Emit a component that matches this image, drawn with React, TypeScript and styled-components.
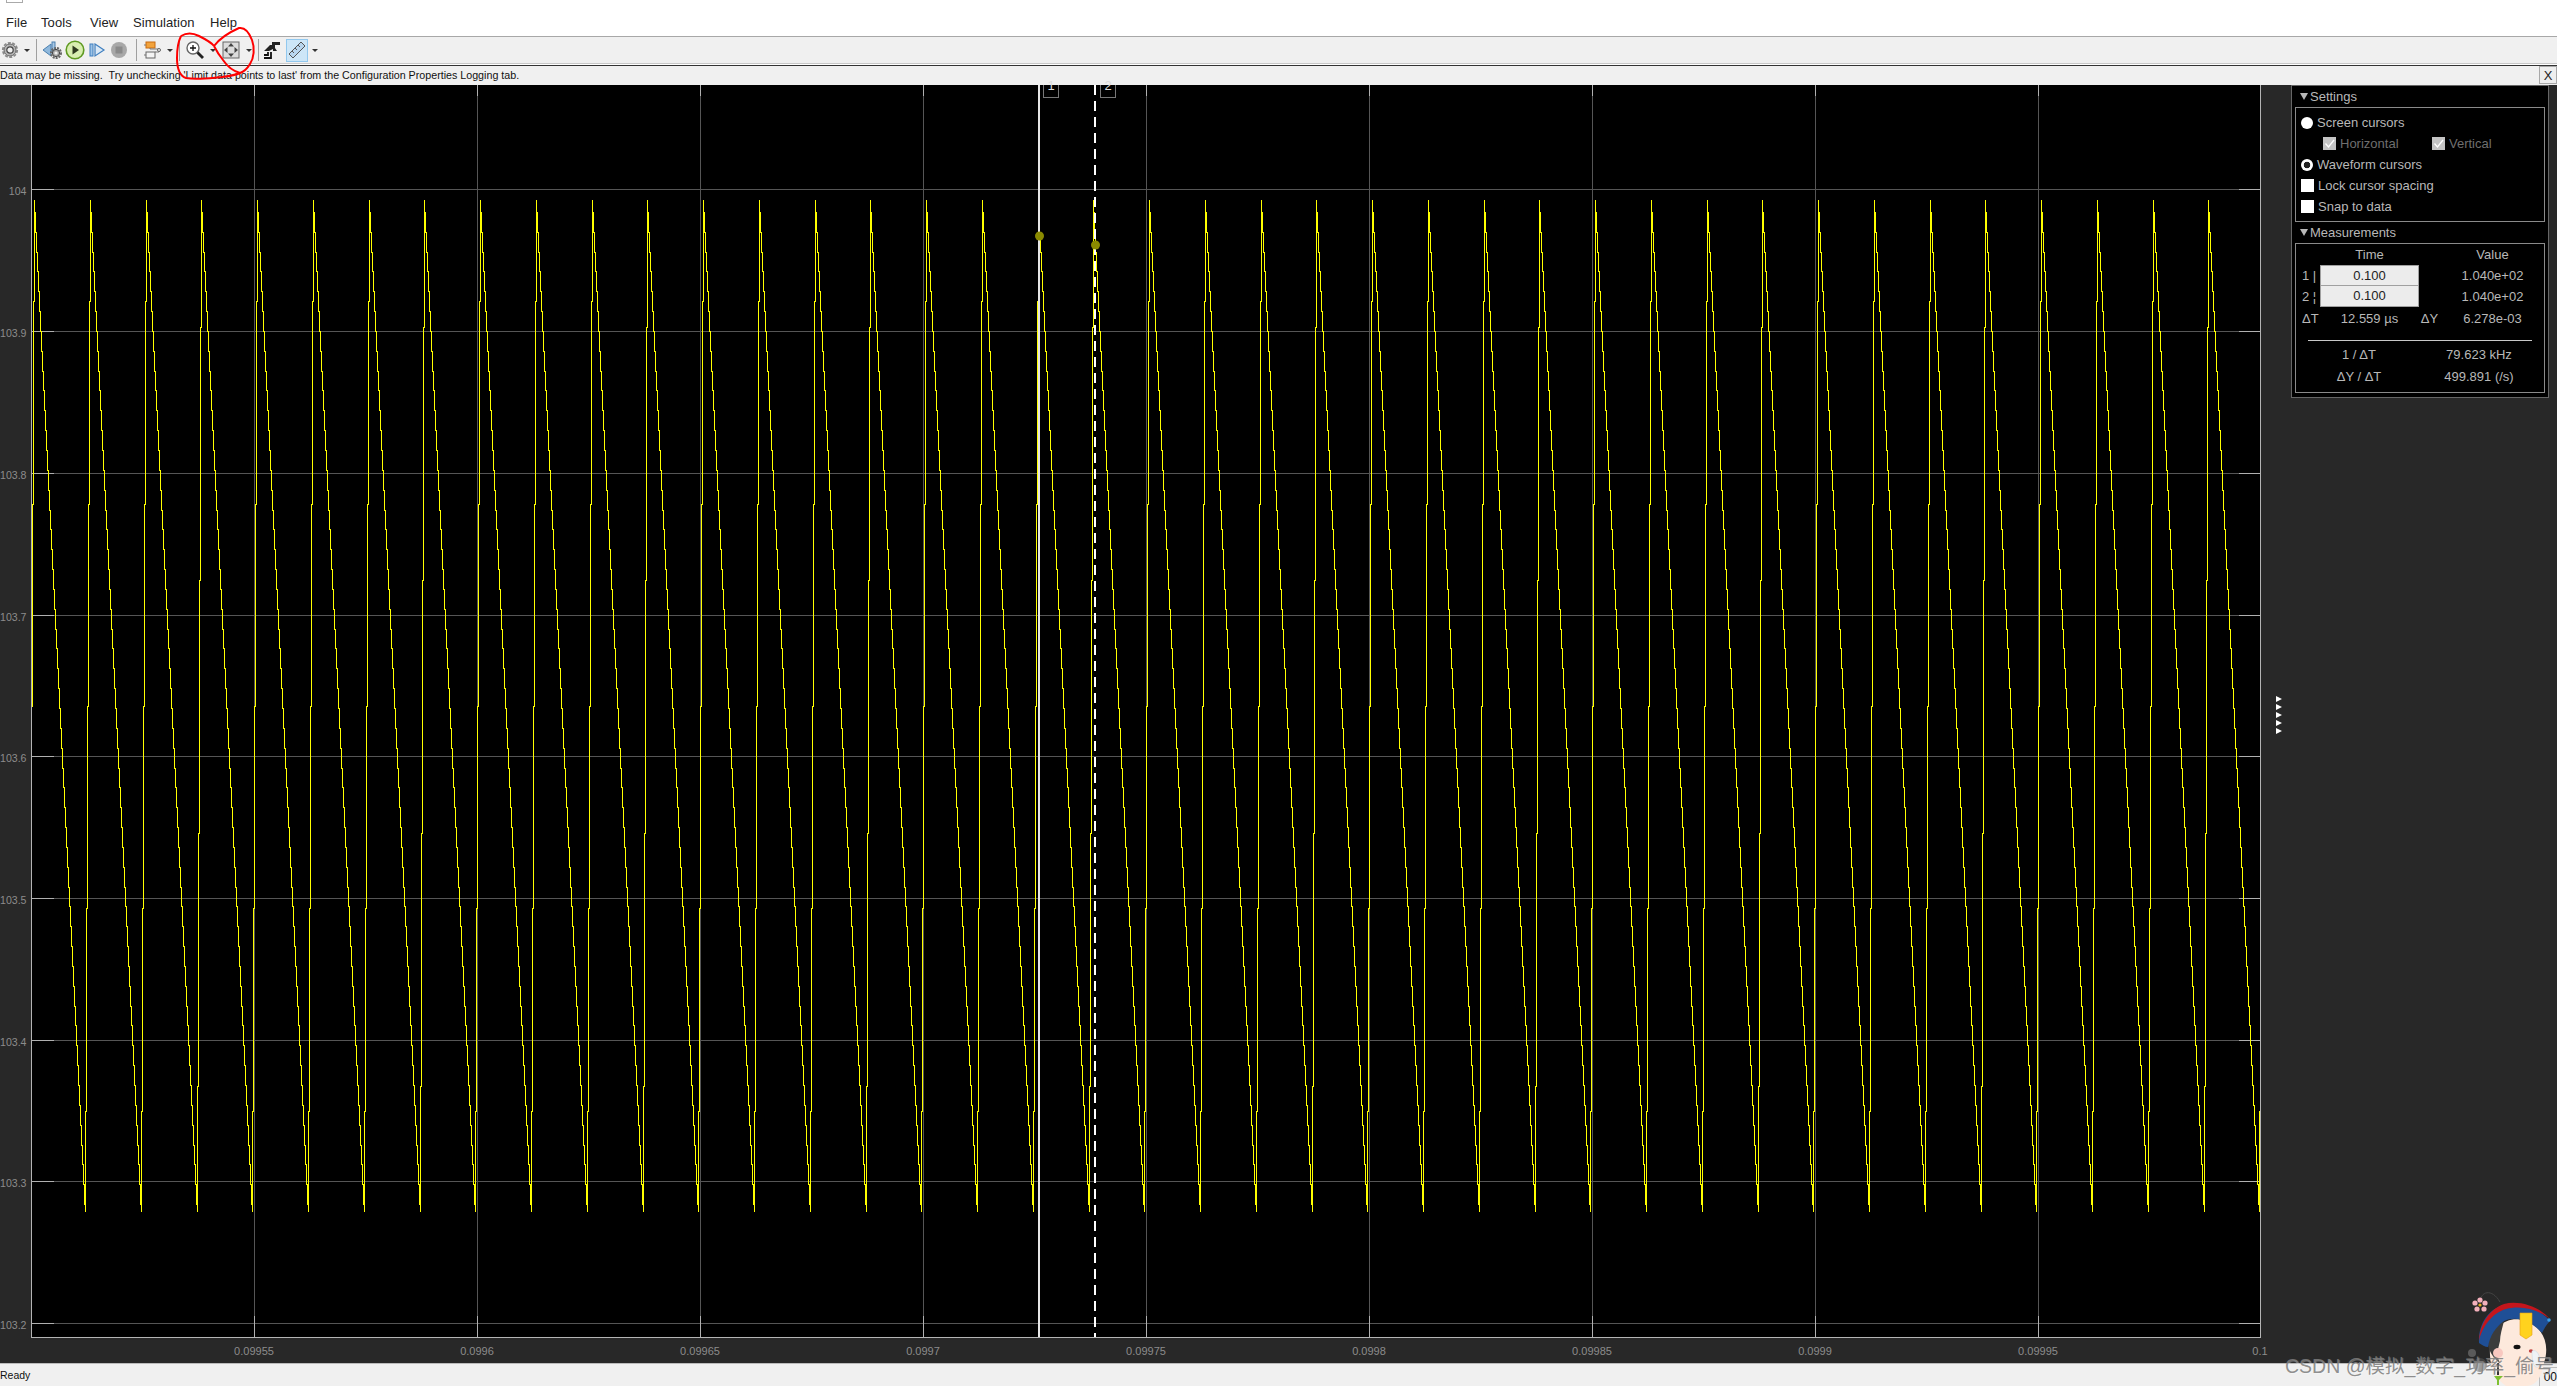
import styled, { createGlobalStyle } from "styled-components";

const GlobalStyle = createGlobalStyle`
  html, body {
    margin: 0;
    padding: 0;
    overflow: hidden;
    background: #282828;
  }
  #root {
    width: 2557px;
    height: 1386px;
  }
`;

const Page = styled.div`
  position: relative;
  display: flex;
  flex-direction: column;
  width: 2557px;
  height: 1386px;
  overflow: hidden;
  background: #282828;
  font-family: "Liberation Sans", Arial, sans-serif;
`;

const MenuBar = styled.div`
  position: relative;
  flex: none;
  height: 37px;
  box-sizing: border-box;
  background: #fff;
  border-bottom: 1px solid #a8a8a8;
  font-size: 13px;
  color: #222;
`;

const TitleStub = styled.div`
  position: absolute;
  left: 6px;
  top: 0;
  width: 15px;
  height: 2px;
  border: 1px solid #aaa;
  border-top: 0;
`;

const MenuItem = styled.span<{ $x: number }>`
  position: absolute;
  left: ${(p) => p.$x}px;
  top: 15px;
  letter-spacing: 0.1px;
`;

const Toolbar = styled.div`
  display: flex;
  flex: none;
  align-items: center;
  height: 27px;
  box-sizing: border-box;
  background: #f0f0f0;
  border-bottom: 1px solid #c8c8c8;
`;

const ToolButton = styled.div<{ $w?: number; $ml?: number; $active?: boolean }>`
  display: flex;
  align-items: center;
  justify-content: center;
  flex: none;
  width: ${(p) => p.$w ?? 22}px;
  height: 23px;
  margin-left: ${(p) => p.$ml ?? 0}px;
  box-sizing: border-box;
  ${(p) => (p.$active ? "background: #cde6f7; border: 1px solid #92c8ee;" : "")}
`;

const Caret = styled.div<{ $w?: number; $ml?: number }>`
  flex: none;
  width: ${(p) => p.$w ?? 12}px;
  margin-left: ${(p) => p.$ml ?? 0}px;
  display: flex;
  justify-content: center;
  &::after {
    content: "";
    border-left: 3px solid transparent;
    border-right: 3px solid transparent;
    border-top: 3px solid #333;
  }
`;

const ToolSep = styled.div<{ $ml: number }>`
  flex: none;
  width: 1px;
  height: 22px;
  margin-left: ${(p) => p.$ml}px;
  background: #a0a0a0;
`;

const MessageBar = styled.div`
  display: flex;
  flex: none;
  justify-content: space-between;
  height: 21px;
  box-sizing: border-box;
  background: #f0f0f0;
  border-top: 1px solid #fff;
  box-shadow: inset 0 1px 0 #333;
  padding-top: 1px;
  font-size: 10.7px;
  line-height: 16px;
  color: #111;
`;

const MessageText = styled.span`
  padding-top: 1px;
`;

const CloseButton = styled.div`
  width: 18px;
  height: 18px;
  box-sizing: border-box;
  border: 1px solid #a8a8a8;
  background: #eee;
  font-size: 13px;
  line-height: 17px;
  text-align: center;
  color: #222;
`;

const Main = styled.div`
  display: flex;
  flex: 1;
  min-height: 0;
`;

const ChartSvg = styled.svg`
  flex: none;
  display: block;
  width: 2262px;
  height: 1278px;
  overflow: visible;
`;

const Gutter = styled.div`
  flex: none;
  width: 29px;
  display: flex;
  flex-direction: column;
  align-items: center;
  gap: 2px;
  padding: 611px 0 0 4px;
  box-sizing: border-box;
`;

const GripArrow = styled.div`
  width: 0;
  height: 0;
  border-top: 3px solid transparent;
  border-bottom: 3px solid transparent;
  border-left: 6px solid #fff;
`;

const Panel = styled.div`
  flex: none;
  width: 258px;
  height: 313px;
  box-sizing: border-box;
  border: 1px solid #666;
  background: #000;
  padding: 0 3px;
  font-size: 13px;
  color: #b8b8b8;
`;

const SectionHeader = styled.div`
  display: flex;
  align-items: center;
  gap: 2px;
  height: 21px;
  padding-left: 5px;
  &::before {
    content: "";
    border-left: 4px solid transparent;
    border-right: 4px solid transparent;
    border-top: 7px solid #b8b8b8;
  }
`;

const SectionBox = styled.div<{ $h: number; $mb?: number }>`
  height: ${(p) => p.$h}px;
  margin-bottom: ${(p) => p.$mb ?? 0}px;
  box-sizing: border-box;
  border: 1px solid #8a8a8a;
`;

const SettingsList = styled.div`
  display: flex;
  flex-direction: column;
  padding: 4px 0 0 5px;
`;

const OptionRow = styled.div<{ $indent?: boolean }>`
  display: flex;
  align-items: center;
  height: 21px;
  padding-left: ${(p) => (p.$indent ? 22 : 0)}px;
`;

const OptionLabel = styled.span<{ $disabled?: boolean; $w?: number }>`
  margin-left: 4px;
  color: ${(p) => (p.$disabled ? "#6f6f6f" : "#b8b8b8")};
  ${(p) => (p.$w ? `width: ${p.$w}px;` : "")}
`;

const Radio = styled.span<{ $on?: boolean }>`
  flex: none;
  width: 12px;
  height: 12px;
  border-radius: 50%;
  background: ${(p) => (p.$on ? "radial-gradient(circle, #222 0 3px, #fff 3.6px)" : "#fff")};
`;

const Check = styled.span`
  flex: none;
  width: 13px;
  height: 13px;
  background: #fff;
`;

const DisabledCheck = styled.span`
  flex: none;
  display: flex;
  width: 13px;
  height: 13px;
  background: #c4c4c4;
`;

const MeasureGrid = styled.div`
  display: grid;
  grid-template-columns: 24px 99px 21px 105px;
  grid-template-rows: 21px 21px 21px 22px;
  align-items: center;
  justify-items: center;
`;

const RowTag = styled.span`
  justify-self: start;
  padding-left: 6px;
  white-space: pre;
`;

const TimeInput = styled.div<{ $first?: boolean }>`
  justify-self: stretch;
  align-self: stretch;
  box-sizing: border-box;
  border: 1px solid #a0a0a0;
  border-top-width: ${(p) => (p.$first ? 1 : 0)}px;
  background: #ececec;
  color: #222;
  text-align: center;
  line-height: 19px;
`;

const Divider = styled.div`
  height: 1px;
  margin: 11px 12px 3px;
  background: #c8c8c8;
`;

const DerivedRow = styled.div`
  display: grid;
  grid-template-columns: 126px 114px;
  height: 22px;
  line-height: 22px;
  text-align: center;
`;

const StatusBar = styled.div`
  display: flex;
  justify-content: space-between;
  flex: none;
  height: 23px;
  box-sizing: border-box;
  background: #f0f0f0;
  border-top: 1px solid #bbb;
  font-size: 10.5px;
  line-height: 22px;
  color: #111;
`;

const StatusField = styled.div`
  width: 17px;
  margin-top: 3px;
  border-top: 1px solid #bbb;
  border-left: 1px solid #bbb;
  font-size: 12px;
  line-height: 18px;
  text-align: right;
`;

const InkOverlay = styled.svg`
  position: absolute;
  left: 0;
  top: 0;
  width: 300px;
  height: 90px;
  pointer-events: none;
`;

const Mascot = styled.svg`
  position: absolute;
  left: 2440px;
  top: 1285px;
  width: 117px;
  height: 101px;
`;

const Watermark = styled.div`
  position: absolute;
  left: 2285px;
  top: 1353px;
  font-family: "Liberation Sans", "Noto Sans CJK SC", sans-serif;
  font-size: 19.5px;
  line-height: 26px;
  white-space: nowrap;
  color: rgba(125, 125, 125, 0.85);
  text-shadow: 1px 1px 1px rgba(255, 255, 255, 0.35);
`;

// plot geometry, in page pixels
const PLOT = { left: 31, right: 2260, top: 85, bottom: 1337 };
const Y_TICKS: [string, number][] = [
  ["104", 189],
  ["103.9", 331],
  ["103.8", 473],
  ["103.7", 615],
  ["103.6", 756],
  ["103.5", 898],
  ["103.4", 1040],
  ["103.3", 1181],
  ["103.2", 1323],
];
const X_TICKS: [string, number][] = [
  ["0.09955", 254],
  ["0.0996", 477],
  ["0.09965", 700],
  ["0.0997", 923],
  ["0.09975", 1146],
  ["0.0998", 1369],
  ["0.09985", 1592],
  ["0.0999", 1815],
  ["0.09995", 2038],
  ["0.1", 2260],
];
const PERIOD = 55.75;
const WAVE_TOP = 200;
const WAVE_BOTTOM = 1212;

// the trace is a staircase: a slow fall, then a quick rise
function buildTrace() {
  let d = "";
  for (let k = -1; k < 41; k++) {
    const peak = 34 + PERIOD * k;
    const low = peak + 51;
    const next = peak + PERIOD;
    const x = Math.round(peak);
    d += `${k === -1 ? "M" : "L"}${x + 0.5} ${WAVE_TOP}`;
    const fallSteps = Math.round(low) - x;
    for (let i = 1; i <= fallSteps; i++) {
      const y = Math.round(WAVE_TOP + ((WAVE_BOTTOM - WAVE_TOP) * (i - 0.4)) / fallSteps);
      d += `V${Math.min(y, WAVE_BOTTOM)}H${x + i + 0.5}`;
    }
    d += `V${WAVE_BOTTOM}`;
    const riseSteps = Math.max(Math.round(next) - Math.round(low), 1);
    for (let i = 1; i <= riseSteps; i++) {
      const y = Math.round(WAVE_BOTTOM - ((WAVE_BOTTOM - WAVE_TOP) * (i - 0.5)) / riseSteps);
      d += `V${y}H${Math.round(low) + i + 0.5}`;
    }
    d += `V${WAVE_TOP}`;
  }
  return d;
}

function ScopeChart() {
  const { left, right, top, bottom } = PLOT;
  return (
    <ChartSvg viewBox={`0 ${top} 2262 1278`} shapeRendering="crispEdges">
      <defs>
        <clipPath id="plotClip">
          <rect x={left + 1} y={top} width={right - left - 1} height={bottom - top} />
        </clipPath>
      </defs>
      <rect x={left} y={top} width={right - left} height={bottom - top} fill="#000" />
      {Y_TICKS.map(([label, y]) => (
        <g key={label}>
          <line x1={left} x2={right} y1={y + 0.5} y2={y + 0.5} stroke="#555" />
          <line x1={left} x2={left + 23} y1={y + 0.5} y2={y + 0.5} stroke="#b0b0b0" />
          <line x1={right - 21} x2={right} y1={y + 0.5} y2={y + 0.5} stroke="#b0b0b0" />
          <text x={26.5} y={y + 6} textAnchor="end" fontSize="10.6" fill="#8c8c8c" fontFamily="Liberation Sans">
            {label}
          </text>
        </g>
      ))}
      {X_TICKS.map(([label, x]) => (
        <g key={label}>
          <line x1={x + 0.5} x2={x + 0.5} y1={top} y2={bottom} stroke="#555" />
          <line x1={x + 0.5} x2={x + 0.5} y1={top} y2={top + 11} stroke="#b0b0b0" />
          <line x1={x + 0.5} x2={x + 0.5} y1={bottom - 21} y2={bottom} stroke="#b0b0b0" />
          <text x={x} y={1355} textAnchor="middle" fontSize="11" fill="#8c8c8c" fontFamily="Liberation Sans">
            {label}
          </text>
        </g>
      ))}
      <path d={buildTrace()} fill="none" stroke="#ffff00" strokeWidth="1" clipPath="url(#plotClip)" />
      <path d={`M${left + 0.5} ${top}V${bottom + 0.5}H${right + 0.5}V${top}`} fill="none" stroke="#b4b4b4" />
      <rect x={1038} y={top} width={2} height={bottom - top} fill="#e6e6e6" />
      <line x1={1095} x2={1095} y1={top} y2={bottom} stroke="#fff" strokeWidth="2" strokeDasharray="10 6" />
      <path d="M1043.5 85V97H1058.5V85M1100.5 85V97H1115.5V85" fill="none" stroke="#777" />
      <text x={1051} y={90} textAnchor="middle" fontSize="13" fill="#ddd" fontFamily="Liberation Sans">
        1
      </text>
      <text x={1108} y={90} textAnchor="middle" fontSize="13" fill="#ddd" fontFamily="Liberation Sans">
        2
      </text>
      <g shapeRendering="auto">
        <circle cx={1039.5} cy={236} r={4.5} fill="#8a8a00" />
        <circle cx={1095.5} cy={245} r={4.5} fill="#8a8a00" />
      </g>
    </ChartSvg>
  );
}

const GearIcon = () => (
  <svg width="18" height="18" viewBox="0 0 18 18">
    <circle cx="9" cy="9" r="7.2" fill="none" stroke="#8a8a8a" strokeWidth="1.8" strokeDasharray="3 1.5" />
    <circle cx="9" cy="9" r="6" fill="#b4b4b4" stroke="#6a6a6a" />
    <circle cx="9" cy="9" r="3.2" fill="#f0f0f0" stroke="#444" strokeWidth="1.2" />
  </svg>
);

const BackGearIcon = () => (
  <svg width="22" height="20" viewBox="0 0 22 20">
    <path d="M1 10 9 4v12z" fill="#8fb8dc" stroke="#4a7fae" />
    <rect x="10" y="2" width="3" height="10" fill="#a9c8e4" stroke="#4a7fae" />
    <circle cx="14" cy="13" r="5" fill="none" stroke="#666" strokeWidth="2" strokeDasharray="2 1" />
    <circle cx="14" cy="13" r="3.6" fill="#aaa" stroke="#444" />
    <circle cx="14" cy="13" r="1.6" fill="#eee" />
  </svg>
);

const PlayIcon = () => (
  <svg width="20" height="20" viewBox="0 0 20 20">
    <circle cx="10" cy="10" r="8.8" fill="#d8eeb0" stroke="#5f9a22" strokeWidth="1.6" />
    <path d="M7.5 5.5 14 10l-6.5 4.5z" fill="#2e3a1e" />
  </svg>
);

const StepIcon = () => (
  <svg width="18" height="18" viewBox="0 0 18 18">
    <rect x="2" y="3" width="3" height="12" fill="#9cc3e6" stroke="#3f7fbf" />
    <path d="M7 3 16 9 7 15z" fill="#dbe9f6" stroke="#3f7fbf" strokeWidth="1.2" />
  </svg>
);

const StopIcon = () => (
  <svg width="18" height="18" viewBox="0 0 18 18">
    <circle cx="9" cy="9" r="8" fill="#a8a8a8" />
    <rect x="5.5" y="5.5" width="7" height="7" fill="#8a8a8a" />
  </svg>
);

const BlockIcon = () => (
  <svg width="20" height="20" viewBox="0 0 20 20">
    <rect x="3" y="2" width="9" height="6" fill="#f2a33c" stroke="#c86b10" />
    <rect x="3" y="12" width="9" height="6" fill="#f4f4f4" stroke="#666" />
    <path d="M7 8v1h9v3h-4M1 5h2M1 15h2" fill="none" stroke="#777" />
    <circle cx="16" cy="10" r="1.5" fill="#f0f0f0" stroke="#666" />
  </svg>
);

const ZoomIcon = () => (
  <svg width="20" height="20" viewBox="0 0 20 20">
    <circle cx="8" cy="8" r="6" fill="#fff" stroke="#666" strokeWidth="1.4" />
    <path d="M5 8h6M8 5v6" stroke="#111" strokeWidth="1.3" />
    <path d="M12.5 12.5 18 18" stroke="#222" strokeWidth="2.8" />
  </svg>
);

const FitIcon = () => (
  <svg width="20" height="20" viewBox="0 0 20 20">
    <rect x="2" y="2" width="16" height="16" fill="#dcdcdc" stroke="#666" />
    <path d="M10 3 7 6.5h6zM10 17l-3-3.5h6zM3 10l3.5-3v6zM17 10l-3.5-3v6z" fill="#444" />
  </svg>
);

const StairIcon = () => (
  <svg width="20" height="20" viewBox="0 0 20 20">
    <path d="M2 18H9V12M2 15H6V12" fill="none" stroke="#111" strokeWidth="1.8" />
    <path d="M2 11 8 5H10V2H18V5H13V8L15 11H11V9L7 11Z" fill="#222" />
  </svg>
);

const RulerIcon = () => (
  <svg width="18" height="18" viewBox="0 0 18 18">
    <path d="M1 13 13 1l4 4L5 17z" fill="#b9d6ee" stroke="#555" />
    <path d="M4 10l2 2M7 7l2 2M10 4l2 2" stroke="#555" />
  </svg>
);

const CheckMark = () => (
  <svg width="13" height="13" viewBox="0 0 13 13">
    <path d="M2.5 6.5 5.5 10 11 3" fill="none" stroke="#fff" strokeWidth="1.3" />
  </svg>
);

function App() {
  return (
    <Page>
      <GlobalStyle />
      <MenuBar>
        <TitleStub />
        <MenuItem $x={6}>File</MenuItem>
        <MenuItem $x={41}>Tools</MenuItem>
        <MenuItem $x={90}>View</MenuItem>
        <MenuItem $x={133}>Simulation</MenuItem>
        <MenuItem $x={210}>Help</MenuItem>
      </MenuBar>
      <Toolbar>
        <ToolButton $w={20}>
          <GearIcon />
        </ToolButton>
        <Caret $w={14} />
        <ToolSep $ml={2} />
        <ToolButton $ml={5}>
          <BackGearIcon />
        </ToolButton>
        <ToolButton>
          <PlayIcon />
        </ToolButton>
        <ToolButton>
          <StepIcon />
        </ToolButton>
        <ToolButton>
          <StopIcon />
        </ToolButton>
        <ToolSep $ml={6} />
        <ToolButton $ml={5}>
          <BlockIcon />
        </ToolButton>
        <Caret />
        <ToolSep $ml={3} />
        <ToolButton $ml={4}>
          <ZoomIcon />
        </ToolButton>
        <Caret $w={14} />
        <ToolButton>
          <FitIcon />
        </ToolButton>
        <Caret $w={13} />
        <ToolSep $ml={3} />
        <ToolButton $ml={2}>
          <StairIcon />
        </ToolButton>
        <ToolButton $ml={3} $active>
          <RulerIcon />
        </ToolButton>
        <Caret $w={14} />
      </Toolbar>
      <MessageBar>
        <MessageText>
          Data may be missing.&nbsp; Try unchecking 'Limit data points to last' from the Configuration
          Properties Logging tab.
        </MessageText>
        <CloseButton>X</CloseButton>
      </MessageBar>
      <Main>
        <ScopeChart />
        <Gutter>
          {[0, 1, 2, 3, 4].map((i) => (
            <GripArrow key={i} />
          ))}
        </Gutter>
        <Panel>
          <SectionHeader>Settings</SectionHeader>
          <SectionBox $h={115}>
            <SettingsList>
              <OptionRow>
                <Radio />
                <OptionLabel>Screen cursors</OptionLabel>
              </OptionRow>
              <OptionRow $indent>
                <DisabledCheck>
                  <CheckMark />
                </DisabledCheck>
                <OptionLabel $disabled $w={92}>
                  Horizontal
                </OptionLabel>
                <DisabledCheck>
                  <CheckMark />
                </DisabledCheck>
                <OptionLabel $disabled>Vertical</OptionLabel>
              </OptionRow>
              <OptionRow>
                <Radio $on />
                <OptionLabel>Waveform cursors</OptionLabel>
              </OptionRow>
              <OptionRow>
                <Check />
                <OptionLabel>Lock cursor spacing</OptionLabel>
              </OptionRow>
              <OptionRow>
                <Check />
                <OptionLabel>Snap to data</OptionLabel>
              </OptionRow>
            </SettingsList>
          </SectionBox>
          <SectionHeader>Measurements</SectionHeader>
          <SectionBox $h={150}>
            <MeasureGrid>
              <span />
              <span>Time</span>
              <span />
              <span>Value</span>
              <RowTag>1 |</RowTag>
              <TimeInput $first>0.100</TimeInput>
              <span />
              <span>1.040e+02</span>
              <RowTag>2 ¦</RowTag>
              <TimeInput>0.100</TimeInput>
              <span />
              <span>1.040e+02</span>
              <RowTag>ΔT</RowTag>
              <span>12.559 µs</span>
              <span>ΔY</span>
              <span>6.278e-03</span>
            </MeasureGrid>
            <Divider />
            <DerivedRow>
              <span>1 / ΔT</span>
              <span>79.623 kHz</span>
            </DerivedRow>
            <DerivedRow>
              <span>ΔY / ΔT</span>
              <span>499.891 (/s)</span>
            </DerivedRow>
          </SectionBox>
        </Panel>
      </Main>
      <StatusBar>
        <span>Ready</span>
        <StatusField>00</StatusField>
      </StatusBar>
      <InkOverlay viewBox="0 0 300 90">
        <path
          d="M181 36C186 33 193 33 199 36C205 39 211 42 214 46M181 36C178 42 177 50 177 58C177 68 180 76 186 78C197 80 210 78 222 77C230 76 236 75 240 73"
          fill="none"
          stroke="#f00"
          strokeWidth="2"
        />
        <path
          d="M214 46C220 38 230 32 239 28C245 27 249 32 252 40C255 48 254 58 250 64C247 69 243 72 240 73C233 71 227 66 223 60C219 55 216 50 214 46"
          fill="none"
          stroke="#f00"
          strokeWidth="2"
        />
      </InkOverlay>
      <Mascot viewBox="0 0 117 101">
        <path d="M40 18C40 6 52 3 60 17" fill="none" stroke="#444" />
        <g fill="#f4b0bc">
          <circle cx="40" cy="15" r="2.6" />
          <circle cx="45" cy="18" r="2.6" />
          <circle cx="44" cy="24" r="2.6" />
          <circle cx="37" cy="24" r="2.6" />
          <circle cx="35" cy="18" r="2.6" />
        </g>
        <circle cx="40" cy="20" r="1.6" fill="#e8b020" />
        <path d="M50 70C48 40 70 30 85 36C104 42 110 60 104 78C102 92 96 101 86 101H66C58 96 50 84 50 70Z" fill="#fde9dc" />
        <path d="M48 60C50 48 56 42 64 36C62 44 60 50 60 56C58 64 56 70 60 78C54 74 50 68 48 60Z" fill="#3c3c3c" />
        <path d="M39 58C38 40 48 24 64 20C80 16 100 24 110 36C106 40 104 44 102 48C92 36 76 30 64 36C56 42 50 50 48 62C45 62 42 60 39 58Z" fill="#1f4f96" />
        <path d="M39 56C40 38 50 24 64 19C80 15 100 22 110 34C98 24 80 20 66 24C52 28 42 42 39 56Z" fill="#c4161c" />
        <circle cx="109" cy="35" r="1.8" fill="#3aa0e8" />
        <path d="M80 28H92V50L86 54L80 50Z" fill="#ffd21e" stroke="#e8a010" strokeWidth="0.6" />
        <ellipse cx="58" cy="68" rx="5" ry="5" fill="#f8c8c0" />
        <ellipse cx="77" cy="62" rx="3.5" ry="2.2" fill="#111" />
        <ellipse cx="91" cy="66" rx="2.2" ry="1.8" fill="#c04040" />
        <path d="M92 66C97 64 100 70 100 78C100 82 96 84 94 80C92 76 92 70 92 66Z" fill="#eef2f6" stroke="#c8d4e0" strokeWidth="0.5" />
        <circle cx="40" cy="80" r="7" fill="#555" fillOpacity="0.55" />
        <circle cx="32" cy="68" r="4" fill="#666" fillOpacity="0.8" />
        <rect x="57" y="78" width="2" height="12" fill="#333" />
        <path d="M54 91h9l-4 4v5h-2v-5z" fill="#7fc030" />
      </Mascot>
      <Watermark>CSDN @模拟_数字_功率_偷号</Watermark>
    </Page>
  );
}

export default App;
